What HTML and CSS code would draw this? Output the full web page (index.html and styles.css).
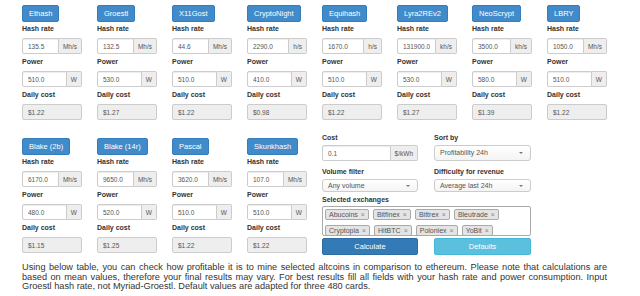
FILE: index.html
```html
<!DOCTYPE html>
<html>
<head>
    <title>Mining Calculator</title>
    <link rel="stylesheet" href="styles.css">
</head>
<body>
    <div class="calc">
        <div class="algos">
            <div class="algo">
                <button class="algo-btn">Ethash</button>
                <label>Hash rate</label>
                <div class="group"><input value="135.5"><span class="addon">Mh/s</span></div>
                <label>Power</label>
                <div class="group"><input value="510.0"><span class="addon">W</span></div>
                <label>Daily cost</label>
                <input class="cost" value="$1.22" disabled>
            </div>
            <div class="algo">
                <button class="algo-btn">Groestl</button>
                <label>Hash rate</label>
                <div class="group"><input value="132.5"><span class="addon">Mh/s</span></div>
                <label>Power</label>
                <div class="group"><input value="530.0"><span class="addon">W</span></div>
                <label>Daily cost</label>
                <input class="cost" value="$1.27" disabled>
            </div>
            <div class="algo">
                <button class="algo-btn">X11Gost</button>
                <label>Hash rate</label>
                <div class="group"><input value="44.6"><span class="addon">Mh/s</span></div>
                <label>Power</label>
                <div class="group"><input value="510.0"><span class="addon">W</span></div>
                <label>Daily cost</label>
                <input class="cost" value="$1.22" disabled>
            </div>
            <div class="algo">
                <button class="algo-btn">CryptoNight</button>
                <label>Hash rate</label>
                <div class="group"><input value="2290.0"><span class="addon">h/s</span></div>
                <label>Power</label>
                <div class="group"><input value="410.0"><span class="addon">W</span></div>
                <label>Daily cost</label>
                <input class="cost" value="$0.98" disabled>
            </div>
            <div class="algo">
                <button class="algo-btn">Equihash</button>
                <label>Hash rate</label>
                <div class="group"><input value="1670.0"><span class="addon">h/s</span></div>
                <label>Power</label>
                <div class="group"><input value="510.0"><span class="addon">W</span></div>
                <label>Daily cost</label>
                <input class="cost" value="$1.22" disabled>
            </div>
            <div class="algo">
                <button class="algo-btn">Lyra2REv2</button>
                <label>Hash rate</label>
                <div class="group"><input value="131900.0"><span class="addon">kh/s</span></div>
                <label>Power</label>
                <div class="group"><input value="530.0"><span class="addon">W</span></div>
                <label>Daily cost</label>
                <input class="cost" value="$1.27" disabled>
            </div>
            <div class="algo">
                <button class="algo-btn">NeoScrypt</button>
                <label>Hash rate</label>
                <div class="group"><input value="3500.0"><span class="addon">kh/s</span></div>
                <label>Power</label>
                <div class="group"><input value="580.0"><span class="addon">W</span></div>
                <label>Daily cost</label>
                <input class="cost" value="$1.39" disabled>
            </div>
            <div class="algo">
                <button class="algo-btn">LBRY</button>
                <label>Hash rate</label>
                <div class="group"><input value="1050.0"><span class="addon">Mh/s</span></div>
                <label>Power</label>
                <div class="group"><input value="510.0"><span class="addon">W</span></div>
                <label>Daily cost</label>
                <input class="cost" value="$1.22" disabled>
            </div>

            <div class="algo">
                <button class="algo-btn">Blake (2b)</button>
                <label>Hash rate</label>
                <div class="group"><input value="6170.0"><span class="addon">Mh/s</span></div>
                <label>Power</label>
                <div class="group"><input value="480.0"><span class="addon">W</span></div>
                <label>Daily cost</label>
                <input class="cost" value="$1.15" disabled>
            </div>
            <div class="algo">
                <button class="algo-btn">Blake (14r)</button>
                <label>Hash rate</label>
                <div class="group"><input value="9650.0"><span class="addon">Mh/s</span></div>
                <label>Power</label>
                <div class="group"><input value="520.0"><span class="addon">W</span></div>
                <label>Daily cost</label>
                <input class="cost" value="$1.25" disabled>
            </div>
            <div class="algo">
                <button class="algo-btn">Pascal</button>
                <label>Hash rate</label>
                <div class="group"><input value="3620.0"><span class="addon">Mh/s</span></div>
                <label>Power</label>
                <div class="group"><input value="510.0"><span class="addon">W</span></div>
                <label>Daily cost</label>
                <input class="cost" value="$1.22" disabled>
            </div>
            <div class="algo">
                <button class="algo-btn">Skunkhash</button>
                <label>Hash rate</label>
                <div class="group"><input value="107.0"><span class="addon">Mh/s</span></div>
                <label>Power</label>
                <div class="group"><input value="510.0"><span class="addon">W</span></div>
                <label>Daily cost</label>
                <input class="cost" value="$1.22" disabled>
            </div>

            <div class="settings">
                <div class="set">
                    <label class="first">Cost</label>
                    <div class="group"><input value="0.1"><span class="addon">$/kWh</span></div>
                </div>
                <div class="set">
                    <label class="first">Sort by</label>
                    <div class="pick">Profitability 24h<span class="caret"></span></div>
                </div>
                <div class="set">
                    <label>Volume filter</label>
                    <div class="pick small">Any volume<span class="caret"></span></div>
                </div>
                <div class="set">
                    <label>Difficulty for revenue</label>
                    <div class="pick small">Average last 24h<span class="caret"></span></div>
                </div>
                <div class="set wide">
                    <label class="ex">Selected exchanges</label>
                    <div class="tags">
                        <span class="tag"><i>&times;</i>Abucoins</span>
                        <span class="tag"><i>&times;</i>Bitfinex</span>
                        <span class="tag"><i>&times;</i>Bittrex</span>
                        <span class="tag"><i>&times;</i>Bleutrade</span>
                        <span class="tag"><i>&times;</i>Cryptopia</span>
                        <span class="tag"><i>&times;</i>HitBTC</span>
                        <span class="tag"><i>&times;</i>Poloniex</span>
                        <span class="tag"><i>&times;</i>YoBit</span>
                    </div>
                </div>
                <button class="btn calc-btn">Calculate</button>
                <button class="btn def-btn">Defaults</button>
            </div>
        </div>

        <p class="note">Using below table, you can check how profitable it is to mine selected altcoins in comparison to ethereum. Please note that calculations are based on mean values, therefore your final results may vary. For best results fill all fields with your hash rate and power consumption. Input Groestl hash rate, not Myriad-Groestl. Default values are adapted for three 480 cards.</p>
    </div>
</body>
</html>
```

FILE: styles.css
```css
body {
    margin: 0;
    font-family: "Liberation Sans", Arial, sans-serif;
    color: #333;
    background: #fff;
}
.calc {
    padding: 5px 33px 0 22px;
}
.algos {
    display: grid;
    grid-template-columns: repeat(8, 60px);
    column-gap: 15px;
    row-gap: 18px;
}
.algo {
    display: flex;
    flex-direction: column;
    align-items: flex-start;
}
.algo-btn {
    height: 17px;
    padding: 0 6px;
    font-family: inherit;
    font-size: 7.5px;
    color: #fff;
    background: #428bca;
    border: 1px solid #357ebd;
    border-radius: 2px;
}
label {
    display: block;
    font-size: 7px;
    font-weight: bold;
    line-height: 10px;
    margin: 3px 0 4px;
}
.algo-btn + label {
    margin-top: 2px;
}
.group {
    display: flex;
    width: 100%;
    height: 16px;
}
input {
    box-sizing: border-box;
    min-width: 0;
    height: 16px;
    padding: 0 5px;
    font-family: inherit;
    font-size: 6.5px;
    color: #555;
    background: #fff;
    border: 1px solid #ccc;
    border-radius: 2px;
    box-shadow: inset 0 1px 1px rgba(0,0,0,.075);
}
.group input {
    flex: 1;
    border-radius: 2px 0 0 2px;
}
.addon {
    display: flex;
    align-items: center;
    padding: 0 4px;
    font-size: 6.5px;
    color: #555;
    background: #eee;
    border: 1px solid #ccc;
    border-left: 0;
    border-radius: 0 2px 2px 0;
}
.cost {
    width: 100%;
    background: #eee;
    box-shadow: none;
}
.settings {
    grid-column: 5 / span 3;
    margin-top: -5px;
    display: grid;
    grid-template-columns: 96px 97px;
    column-gap: 16px;
    align-content: start;
}
.settings label {
    margin: 6px 0 2px;
}
.settings label.first {
    margin-top: 0;
}
.settings label.ex {
    margin: 3px 0 1px;
}
.set.wide {
    grid-column: 1 / span 2;
}
.pick {
    position: relative;
    box-sizing: border-box;
    height: 16px;
    line-height: 14px;
    padding: 0 5px;
    font-size: 7px;
    color: #555;
    background: linear-gradient(#fff, #f4f4f4);
    border: 1px solid #ccc;
    border-radius: 3px;
}
.pick.small {
    height: 13px;
    line-height: 11px;
}
.caret {
    position: absolute;
    right: 7px;
    top: 50%;
    margin-top: -1px;
    border-top: 2px solid #777;
    border-left: 2px solid transparent;
    border-right: 2px solid transparent;
}
.tags {
    box-sizing: border-box;
    height: 30px;
    padding: 2px;
    border: 1px solid #aaa;
    border-radius: 2px;
    display: flex;
    flex-wrap: wrap;
    gap: 5px 4px;
    align-content: flex-start;
}
.tag {
    display: inline-flex;
    flex-direction: row-reverse;
    align-items: center;
    gap: 3px;
    height: 9px;
    padding: 0 3px;
    font-size: 7px;
    color: #555;
    background: #e4e4e4;
    border: 1px solid #aaa;
    border-radius: 2px;
}
.tag i {
    font-style: normal;
    color: #888;
    font-size: 7px;
}
.btn {
    height: 17px;
    margin-top: 2px;
    font-family: inherit;
    font-size: 7.5px;
    color: #fff;
    border-radius: 2px;
}
.calc-btn {
    background: #337ab7;
    border: 1px solid #2e6da4;
}
.def-btn {
    background: #5bc0de;
    border: 1px solid #46b8da;
}
.note {
    margin: 8px 0 0;
    font-size: 9.2px;
    line-height: 9.5px;
    color: #333;
    text-align: justify;
}
```
